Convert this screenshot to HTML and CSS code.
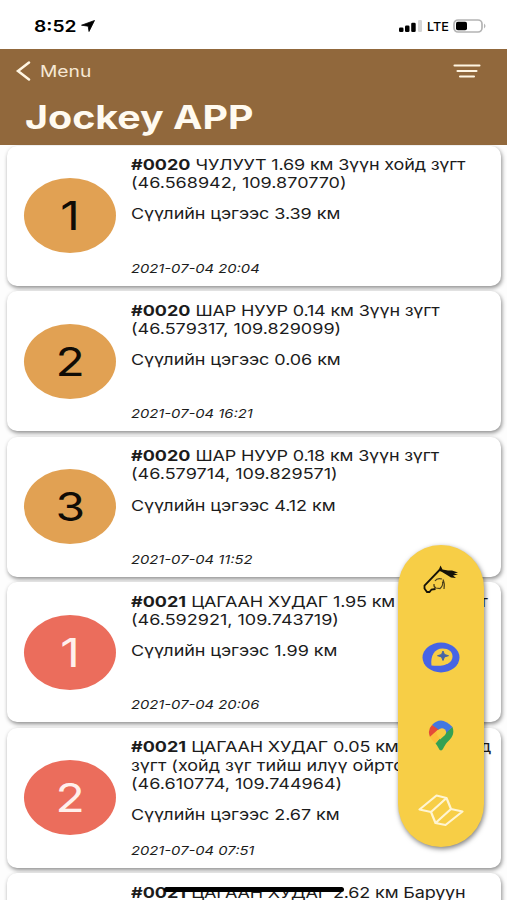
FILE: index.html
```html
<!DOCTYPE html>
<html lang="mn">
<head>
    <meta charset="UTF-8">
    <title>Jockey APP</title>
    <link rel="stylesheet" href="styles.css">
</head>
<body>
<div class="status">
    <span class="time">8:52</span>
    <svg class="arrow" width="14" height="12" viewBox="0 0 14 12"><path d="M13.5 .5 8 11.5 7.2 6.2 .5 5.2z" stroke="#000" stroke-width=".8"/></svg>
    <svg class="signal" width="24" height="12" viewBox="0 0 24 12">
        <rect x="0" y="7.5" width="4.5" height="4.5" rx="1.3"/>
        <rect x="6" y="5.5" width="4.5" height="6.5" rx="1.3"/>
        <rect x="12.2" y="2.8" width="4.5" height="9.2" rx="1.3"/>
        <rect x="19" y="0" width="4" height="12" rx="1.3" fill="#d5d5d5"/>
    </svg>
    <span class="lte">LTE</span>
    <svg class="battery" width="34" height="14" viewBox="0 0 34 14">
        <rect x="1" y="1" width="28" height="12" rx="4" fill="#fff" stroke="#b4b4b4" stroke-width="1.7"/>
        <rect x="3" y="2.8" width="11" height="8.4" rx="1.8"/>
        <path d="M31 4.5q3 2.5 0 5z" fill="#b4b4b4"/>
    </svg>
</div>
<header>
    <div class="bar">
        <svg class="back" width="16" height="20" viewBox="0 0 16 20"><path d="M14 1.5 3 10 14 18.500"/></svg>
        <span class="menu">Menu</span>
        <svg class="filter" width="28" height="16" viewBox="0 0 28 16"><path d="M1.500 2.500h25M4.500 8h19M7 13.500h14"/></svg>
    </div>
    <h1>Jockey APP</h1>
</header>
<main>
    <div class="card">
        <div class="num"><span>1</span></div>
        <div class="info">
            <p><b>#0020</b> <span class="place">ЧУЛУУТ 1.69 км Зүүн хойд зүгт</span><br>(46.568942, 109.870770)</p>
            <p class="last">Сүүлийн цэгээс 3.39 км</p>
            <p class="date">2021-07-04 20:04</p>
        </div>
    </div>
    <div class="card">
        <div class="num"><span>2</span></div>
        <div class="info">
            <p><b>#0020</b> <span class="place">ШАР НУУР 0.14 км Зүүн зүгт</span><br>(46.579317, 109.829099)</p>
            <p class="last">Сүүлийн цэгээс 0.06 км</p>
            <p class="date">2021-07-04 16:21</p>
        </div>
    </div>
    <div class="card">
        <div class="num"><span>3</span></div>
        <div class="info">
            <p><b>#0020</b> <span class="place">ШАР НУУР 0.18 км Зүүн зүгт</span><br>(46.579714, 109.829571)</p>
            <p class="last">Сүүлийн цэгээс 4.12 км</p>
            <p class="date">2021-07-04 11:52</p>
        </div>
    </div>
    <div class="card">
        <div class="num red"><span>1</span></div>
        <div class="info">
            <p><b>#0021</b> <span class="place">ЦАГААН ХУДАГ 1.95 км Өмнө зүгт</span><br>(46.592921, 109.743719)</p>
            <p class="last">Сүүлийн цэгээс 1.99 км</p>
            <p class="date">2021-07-04 20:06</p>
        </div>
    </div>
    <div class="card">
        <div class="num red"><span>2</span></div>
        <div class="info">
            <p><b>#0021</b> <span class="place">ЦАГААН ХУДАГ 0.05 км Зүүн хойд</span><br>зүгт (хойд зүг тийш илүү ойртсон)<br>(46.610774, 109.744964)</p>
            <p class="last">Сүүлийн цэгээс 2.67 км</p>
            <p class="date">2021-07-04 07:51</p>
        </div>
    </div>
    <div class="card">
        <div class="num red"></div>
        <div class="info">
            <p><b>#0021</b> <span class="place">ЦАГААН ХУДАГ 2.62 км Баруун</span></p>
        </div>
    </div>
</main>
<nav class="tools">
    <!-- horse -->
    <svg width="38" height="30" viewBox="0 0 38 30">
        <path d="M18 4.500 2.500 20.500 2.500 23.500 5 27 7.500 27 9.500 24.500 13.500 24" fill="none" stroke="#151208" stroke-width="1.800"/>
        <path d="M16.500 5.500 18.500 .5 20.500 4.500 26 5.500 30 5.500 36 7.500 32 8.500 36 9.500 31 10.500 34 13 29 12.500 25 10 20 7z" fill="#151208"/>
        <path d="M20 14q-5-1.500-7 2M12 19q-.5 3 2 4l4 .5q3.500-3 2.500-7M21 14.500q2 4 1 9.500" fill="none" stroke="#4d401a" stroke-width="1.200"/>
    </svg>
    <!-- mapbox -->
    <svg width="38" height="31" viewBox="0 0 38 31">
        <ellipse cx="19" cy="15.500" rx="18.500" ry="15" fill="#4764e5"/>
        <path d="M9.500 23.500C8 13.500 13 6.500 20.500 6.500c6 0 10 3 10 8C30.500 21 23 25 9.500 23.500z" fill="#f7ce46"/>
        <path d="M21 9 22.500 12.500 26.500 13.700 22.500 14.900 21 18.500 19.500 14.900 15.500 13.700 19.500 12.500z" fill="#4764a5" stroke="#4764a5"/>
    </svg>
    <!-- google maps -->
    <svg width="26" height="31" viewBox="0 0 26 31">
        <path d="M24.500 7C27 14 23.500 18 19 22.500 16 26 15 30.500 13 30.500S10.500 27 7.500 23.500L17.500 12z" fill="#35a153"/>
        <path d="M4 5Q8 .5 13 .5T24.500 7L18 13 8 10z" fill="#4378e0"/>
        <path d="M4 5 10.500 9.500 2 17Q-1 10 4 5z" fill="#e44b38"/>
        <path d="M2 17 9.500 10 14 15 7.500 23.500Q4 20.500 2 17z" fill="#fcbf3a"/>
        <path d="M9 11Q13 6.500 17 9.500 19.500 12.500 16.500 15.500L12 19.500 8.500 14z" fill="#f8cb42"/>
    </svg>
    <!-- folded map -->
    <svg width="46" height="33" viewBox="0 0 46 33">
        <path d="M18.500 1.500 28.500 4 33 15 44.500 17.500 27.500 31 17.500 29 13 18 1.500 15.500zM28.500 4 13 18M33 15 17.500 29" fill="none" stroke="#fff5d2" stroke-width="2.200" stroke-linejoin="round"/>
    </svg>
</nav>
<div class="home"></div>
</body>
</html>
```
FILE: styles.css
```css
* {
    box-sizing: border-box;
}

body {
    margin: 0;
    height: 900px;
    overflow: hidden;
    background-color: #fdfdfd;
    font-family: Inter, "Liberation Sans", sans-serif;
    color: #1c1c1c;
}

.status {
    height: 49px;
    padding: 3px 20px 0 34px;
    display: flex;
    align-items: center;
    background-color: #ffffff;
    color: #000000;
}

.time {
    width: 47px;
    font-size: 16px;
    font-weight: 600;
    transform: scaleX(1.2);
    transform-origin: left;
}

.signal {
    margin-left: auto;
    margin-right: 4px;
}

.lte {
    width: 26px;
    font-size: 12px;
    font-weight: 500;
    transform: scaleX(1.06);
    transform-origin: left;
}

header {
    height: 96px;
    background-color: #91683c;
    color: #fffaf0;
}

.bar {
    height: 44px;
    padding: 0 26px 0 15px;
    display: flex;
    align-items: center;
}

.back, .filter {
    fill: none;
    stroke: #fff5e2;
    stroke-width: 2.5;
    stroke-linecap: round;
}

.filter {
    margin-left: auto;
    stroke-width: 2.1;
}

.menu {
    margin-left: 9px;
    font-size: 16px;
    color: #f7e8d4;
    transform: scaleX(1.2);
    transform-origin: left;
}

h1 {
    width: fit-content;
    margin: 5px 0 0 25px;
    font-size: 32px;
    line-height: 40px;
    font-weight: 700;
    white-space: nowrap;
    transform: scaleX(1.23);
    transform-origin: left;
}

main {
    height: 755px;
    overflow: hidden;
    padding: 0.5px 6px 0 7px;
    display: flex;
    flex-direction: column;
    gap: 5.6px;
}

.card {
    height: 140px;
    flex-shrink: 0;
    padding-left: 17px;
    display: flex;
    align-items: center;
    background-color: #ffffff;
    border-radius: 10px;
    box-shadow: 1px 2px 4px rgba(0, 0, 0, 0.45);
}

.num {
    width: 92px;
    height: 75px;
    flex-shrink: 0;
    display: flex;
    align-items: center;
    justify-content: center;
    border-radius: 50%;
    background-color: #e1a153;
    color: #100c06;
    font-size: 40px;
}

.num span {
    transform: scaleX(1.2);
}

.red {
    background-color: #eb6d5c;
    color: #fff0ec;
}

/* text is wider than the font's own proportions */
.info {
    height: 140px;
    margin-left: 14.5px;
    padding: 10.5px 0 9px;
    display: flex;
    flex-direction: column;
    white-space: nowrap;
    transform: scaleX(1.2);
    transform-origin: left;
}

.info p {
    margin: 0 0 13px;
    font-size: 15px;
    line-height: 18.2px;
}

.info .place {
    letter-spacing: -0.14px;
}

.info .last {
    letter-spacing: -0.06px;
}

.info .date {
    margin: auto 0 0;
    font-size: 12.3px;
    line-height: 17px;
    font-style: italic;
}

/* floating buttons over the list */
.tools {
    position: absolute;
    top: 545px;
    left: 398px;
    width: 86px;
    height: 302px;
    padding: 20px 0 20px;
    display: grid;
    grid-template-rows: 30px 31px 31px 33px;
    row-gap: 47px;
    justify-items: center;
    border-radius: 43px;
    background-color: #f7ce46;
    box-shadow: 1px 2px 5px rgba(0, 0, 0, 0.5);
}

.tools svg:last-child {
    margin-top: -4px;
}

.home {
    position: absolute;
    top: 887px;
    left: 164px;
    width: 180px;
    height: 5px;
    border-radius: 3px;
    background-color: #000000;
}
```
